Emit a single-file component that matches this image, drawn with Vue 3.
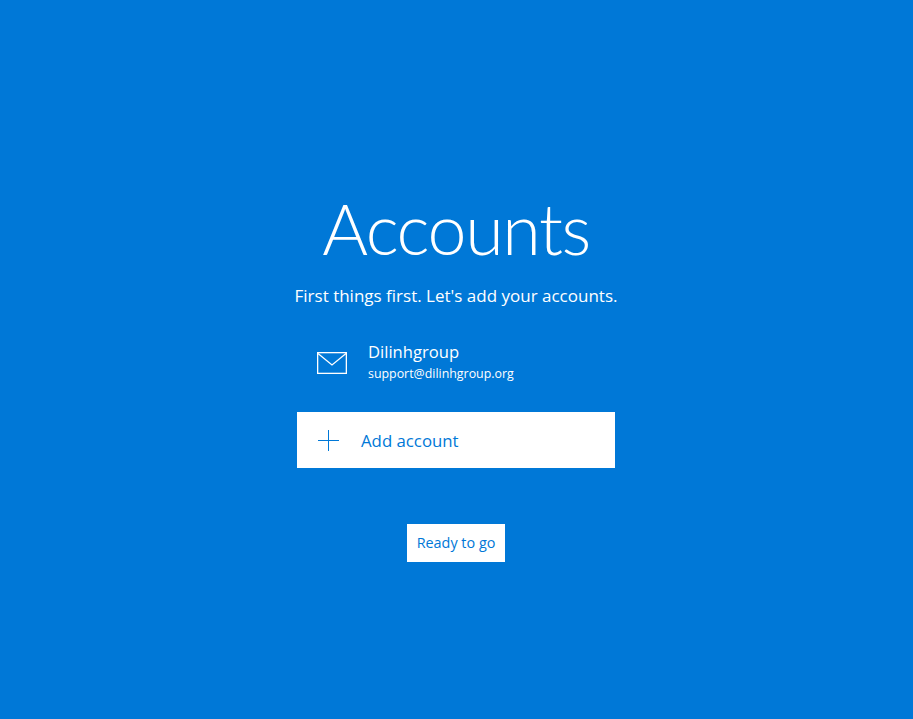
<script setup>
const account = { name: 'Dilinhgroup', email: 'support@dilinhgroup.org' }
</script>

<template>
  <main class="page">
    <h1 class="title">Accounts</h1>
    <p class="sub">First things first. Let's add your accounts.</p>
    <div class="account">
      <svg class="mail" width="30" height="22" viewBox="0 0 30 22" fill="none" stroke="#fff" stroke-width="1.3">
        <rect x="0.65" y="0.65" width="28.7" height="20.7" />
        <path d="M1 1.5 L15 13 L29 1.5" />
      </svg>
      <div class="info">
        <div class="name">{{ account.name }}</div>
        <div class="email">{{ account.email }}</div>
      </div>
    </div>
    <button class="add">
      <svg width="21" height="21" viewBox="0 0 21 21" stroke="#0078d7" stroke-width="1" fill="none">
        <path d="M0 10.5H21M10.5 0V21" />
      </svg>
      <span>Add account</span>
    </button>
    <button class="go">Ready to go</button>
  </main>
</template>

<style scoped>
.page {
  height: 719px;
  background: #0078d7;
  color: #fff;
  font-family: "Open Sans", "Noto Sans", sans-serif;
  display: flex;
  flex-direction: column;
  align-items: center;
  padding: 186px 1px 0 0;
  box-sizing: border-box;
}
.title {
  margin: 0;
  font-family: Lato, "Open Sans", sans-serif;
  font-size: 70px;
  font-weight: 300;
  line-height: 84px;
  letter-spacing: -1.4px;
}
.sub {
  margin: 13px 0 0;
  font-size: 17px;
  line-height: 26px;
}
.account {
  width: 318px;
  margin-top: 31px;
  display: flex;
  align-items: center;
  gap: 21px;
  padding-left: 20px;
  box-sizing: border-box;
}
.mail { margin-top: 3px; }
.info { display: flex; flex-direction: column; }
.name { font-size: 16.6px; line-height: 24px; }
.email { font-size: 12.4px; line-height: 18px; padding-top: 1px; }
.add {
  width: 318px;
  height: 56px;
  margin-top: 29px;
  background: #fff;
  border: 0;
  color: #0078d7;
  font: inherit;
  font-size: 16.8px;
  display: flex;
  align-items: center;
  gap: 22px;
  padding: 0 0 0 21px;
}
.go {
  width: 98px;
  height: 38px;
  margin-top: 56px;
  background: #fff;
  border: 0;
  color: #0078d7;
  font: inherit;
  font-size: 14.4px;
  padding: 0 0 2px;
}
</style>
